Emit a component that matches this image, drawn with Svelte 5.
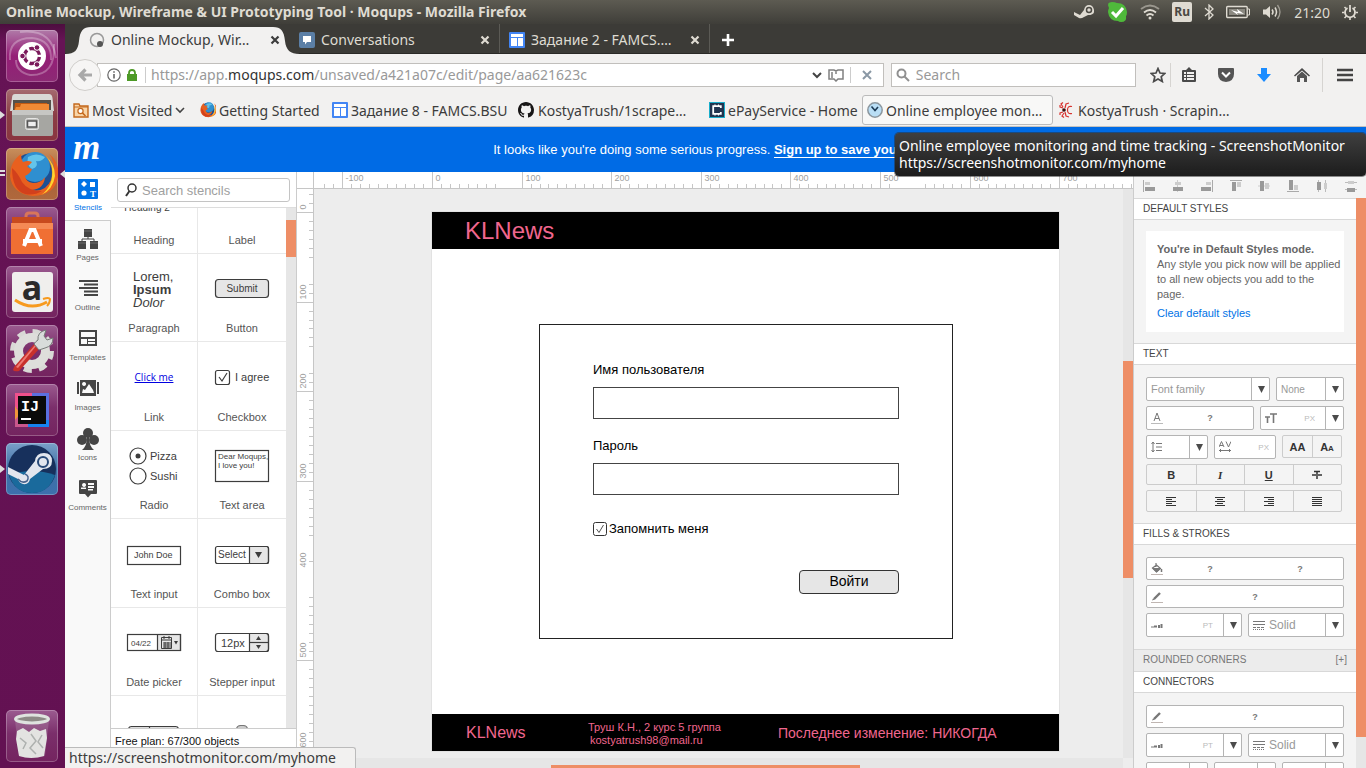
<script>
  const launcher = ['dash', 'files', 'firefox', 'software', 'amazon', 'settings', 'intellij', 'steam'];
  const running = { files: 'one', firefox: 'two', steam: 'one' };

  const tabs = [
    { icon: 'chat', title: 'Conversations' },
    { icon: 'site', title: 'Задание 2 - FAMCS.…' }
  ];

  const bookmarks = [
    { icon: 'folder', title: 'Most Visited', more: true },
    { icon: 'fox', title: 'Getting Started' },
    { icon: 'site', title: 'Задание 8 - FAMCS.BSU' },
    { icon: 'github', title: 'KostyaTrush/1scrape…', wide: true },
    { icon: 'epay', title: 'ePayService - Home' },
    { icon: 'clock', title: 'Online employee mon…', hover: true },
    { icon: 'spider', title: 'KostyaTrush · Scrapin…' }
  ];

  const sections = ['Stencils', 'Pages', 'Outline', 'Templates', 'Images', 'Icons', 'Comments'];

  const stencils = [
    'Heading', 'Label', 'Paragraph', 'Button', 'Link', 'Checkbox', 'Radio', 'Text area',
    'Text input', 'Combo box', 'Date picker', 'Stepper input'
  ];

  const aligners = ['Left', 'Center', 'Right', 'Top', 'Middle', 'Bottom', 'Spread', 'Stack'];

  const scale = 0.896;
  const range = (from, to) => Array.from({ length: (to - from) / 10 + 1 }, (_, i) => from + i * 10);
  const hSkip = [80, 90, 520, 530, 540];
  const vSkip = [60, 70, 160, 170, 370, 380, 400, 410, 420];
  const hTicks = range(-120, 780).filter((t) => !hSkip.includes(t));
  const vTicks = range(-20, 610).filter((t) => !vSkip.includes(t));
  const hx = (t) => Math.round(135 + t * scale) + 0.5;
  const vy = (t) => Math.round(23 + t * scale) + 0.5;

  let remember = $state(true);
</script>

{#snippet foxArt()}
  <circle cx="26" cy="25" r="20" fill="#1d4f93" />
  <circle cx="29" cy="19" r="15" fill="#2f8fd0" />
  <path d="M22 9q8-5 17 0q-3 5-9 4q3 6-4 8q-6-4-4-12z" fill="#63c4ea" />
  <path d="M5 20C7 13 11 9 15 6q0 5 2 8q5-2 9 0q-2 3-5 4q2 3 5 3q-2 5-7 7q1 6 8 7q8 0 12-6q-1 12-13 13q13 3 20-11q4-9 1-18q-1-4-4-7q11 8 9 23Q49 47 27 48Q6 46 4 28z" fill="#e8601f" />
  <path d="M40 8q9 8 9 20q-2 14-14 19q13-9 11-27q-1-6-6-12z" fill="#ffd42e" />
  <path d="M6 20q6 5 10 14q6 9 20 9q-8 5-17 3Q6 42 6 20z" fill="#d2401c" />
{/snippet}

{#snippet tile(name)}
  <svg viewBox="0 0 52 52" width="52" height="52" aria-hidden="true">
    {#if name === 'dash'}
      <g fill="none" stroke="#fff" stroke-opacity=".28" stroke-width="2">
        <path d="M4 30Q2 8 26 8Q46 10 45 30" /><path d="M48 14Q50 46 24 45Q10 42 10 30" /><path d="M14 2Q46-2 50 28" />
      </g>
      <circle cx="26" cy="26" r="14" fill="#fff" />
      <circle cx="26" cy="26" r="7.5" fill="none" stroke="#7b1a5c" stroke-width="3.4" stroke-dasharray="13.2 2.5" stroke-dashoffset="-1" />
      <g fill="#7b1a5c" stroke="#fff"><circle cx="16.5" cy="26" r="2.8" /><circle cx="31" cy="17.5" r="2.8" /><circle cx="31" cy="34.5" r="2.8" /></g>
    {:else if name === 'files'}
      <path d="M9 5h34q3 0 3.500 4L48 22H4L6 9q0-4 3-4z" fill="#d9d9d6" />
      <path d="M7 11h38v12H7z" fill="#55504a" />
      <path d="M9 14h32l2 9H8z" fill="#c25a12" /><path d="M15 15h28v8H8l2-5h4z" fill="#f08a35" />
      <path d="M6 21h41v24q0 2-2 2H8q-2 0-2-2z" fill="#a6a6a2" /><path d="M6 21h41v5H6z" fill="#c6c6c3" />
      <rect x="19.500" y="29.500" width="13" height="11" rx="2" fill="#b9b9b6" stroke="#e6e6e4" />
      <rect x="21.500" y="32" width="9" height="6" fill="#eee" stroke="#555" stroke-width="1.500" />
    {:else if name === 'firefox'}
      {@render foxArt()}
    {:else if name === 'software'}
      <path d="M20 18V9q0-3 3-3h6q3 0 3 3v9" fill="none" stroke="#d8765a" stroke-width="3" />
      <path d="M6 10h40v9H6z" fill="#c84a1e" /><path d="M5 16h42v31H5z" fill="#f06f33" /><path d="M5 16h42v6H5z" fill="#f58a55" />
      <path d="M18 39L24.500 23h4L35 39" fill="none" stroke="#fff" stroke-width="4" /><path d="M17 32h19v4H17z" fill="#fff" />
    {:else if name === 'amazon'}
      <rect x="6" y="6" width="41" height="40" rx="3" fill="#f0efed" />
      <text x="26" y="34" text-anchor="middle" font-family="Noto Sans, sans-serif" font-weight="700" font-size="34" fill="#2b2b2b">a</text>
      <path d="M9 34q16 11 32 2" fill="none" stroke="#f79a1e" stroke-width="3" /><path d="M37 33q6-2 7 0q0 4-3 7" fill="none" stroke="#f79a1e" stroke-width="2" />
    {:else if name === 'settings'}
      <circle cx="26" cy="26" r="19" fill="none" stroke="#d9d9d6" stroke-width="6" stroke-dasharray="7.920 7" />
      <circle cx="26" cy="26" r="13.500" fill="none" stroke="#dededb" stroke-width="9" />
      <path d="M8 42L28 19l5 5L13 46q-5 1-6-1z" fill="#c8302b" /><path d="M10 42L29 20l1 1L12 43z" fill="#ee7a72" />
      <path d="M28 19q2-3 4-4q-1-8 8-10l-2 6l3 4l6-2q0 8-8 10l-6 2z" fill="#d8dcda" stroke="#777b79" />
    {:else if name === 'intellij'}
      <path d="M9 9h17v17H9z" fill="#f0508c" /><path d="M26 9h17v34H26z" fill="#5b6fe0" /><path d="M9 24h18v19H9z" fill="#c9578c" /><path d="M22 36h21v7H22z" fill="#1683f0" /><path d="M9 22l5 8l-5 6z" fill="#f0963a" />
      <rect x="12" y="12" width="28" height="28" fill="#0a0a0a" />
      <text x="15" y="27" font-family="Liberation Mono, monospace" font-weight="700" font-size="15" fill="#fff">IJ</text><path d="M15 34h10v2H15z" fill="#fff" />
    {:else if name === 'steam'}
      <circle cx="26" cy="26" r="24" fill="#17305c" /><path d="M3 32q23-8 46 0q-6 18-23 18T3 32z" fill="#1a6a9c" />
      <path d="M2 24l16 8l11-14q1-8 9-8t8 8t-9 8L24 36q-1 6-7 5q-4-1-5-5L2 31z" fill="#e2e6ee" />
      <circle cx="37" cy="19" r="5" fill="none" stroke="#294a78" stroke-width="2" /><path d="M12 36q4 5 9 2q3-5-2-7" fill="none" stroke="#47648f" stroke-width="1.500" />
    {:else}
      <path d="M9 10h34l-4 36q-13 4-26 0z" fill="#dcdfe0" fill-opacity=".18" />
      <path d="M11 21l6-3l6 4l5-4l6 3l6-2l1 9l-3 18q-13 4-25 0l-3-17z" fill="#e3e3e1" />
      <path d="M14 28l6 5l-3 6M25 24l5 7l-6 7l6 6M36 25l-4 7l5 6" fill="none" stroke="#aeb1af" stroke-width="1.500" />
      <ellipse cx="26" cy="9" rx="16.500" ry="4" fill="#8d8a86" stroke="#dfe3df" stroke-width="3" />
    {/if}
  </svg>
{/snippet}

{#snippet favicon(name)}
  <svg viewBox="0 0 16 16" width="16" height="16" aria-hidden="true">
    {#if name === 'chat'}
      <rect width="16" height="16" rx="2" fill="#5b7fa6" /><path d="M4 4h8v6H8l-2 2.500V10H4z" fill="#fff" />
    {:else if name === 'site'}
      <rect width="16" height="16" rx="1" fill="#4285f4" /><path d="M2 2h12v3H2zM2 6h6v8H2zM9 6h5v8H9z" fill="#fff" />
    {:else if name === 'folder'}
      <path d="M1 15V2h5l1 2h8v11z" fill="#f9d5a8" stroke="#c4681c" stroke-width="1.400" /><path d="M1 5h14" stroke="#c4681c" />
      <circle cx="7.500" cy="9" r="2.600" fill="#fff" stroke="#c4681c" stroke-width="1.200" /><path d="M9.500 11l3 3" stroke="#c4681c" stroke-width="1.600" />
    {:else if name === 'fox'}
      <g transform="translate(-1 -1) scale(.34)">{@render foxArt()}</g>
    {:else if name === 'github'}
      <path fill="#181616" d="M8 0C3.580 0 0 3.580 0 8c0 3.540 2.290 6.530 5.470 7.590.4.070.55-.17.55-.38 0-.19-.01-.82-.01-1.490-2.010.37-2.530-.49-2.690-.94-.09-.23-.48-.94-.82-1.130-.28-.15-.68-.52-.01-.53.63-.01 1.080.58 1.230.82.72 1.210 1.870.87 2.330.66.070-.52.28-.87.51-1.070-1.780-.2-3.640-.89-3.640-3.950 0-.87.31-1.590.82-2.150-.08-.2-.36-1.020.08-2.120 0 0 .67-.21 2.200.82.64-.18 1.320-.27 2-.27s1.360.09 2 .27c1.530-1.040 2.200-.82 2.200-.82.44 1.100.16 1.920.08 2.120.51.56.82 1.270.82 2.150 0 3.070-1.870 3.750-3.650 3.950.29.25.54.73.54 1.480 0 1.070-.01 1.930-.01 2.200 0 .21.15.46.55.38A8.010 8.010 0 0 0 16 8c0-4.420-3.580-8-8-8z" />
    {:else if name === 'epay'}
      <rect x=".5" y=".5" width="15" height="15" fill="#22354f" stroke="#18aecb" /><path d="M11.800 6V4.200H4.200v7.600h7.600V10" fill="none" stroke="#fff" stroke-width="1.800" /><path d="M6 2.500v2M9.500 2.500v2M6 11.500v2M9.500 11.500v2" stroke="#fff" stroke-width="1.200" />
    {:else if name === 'clock'}
      <circle cx="8" cy="8" r="7.200" fill="#b9def5" stroke="#8b969e" stroke-width="1.500" /><path d="M4.500 4.500L8 8.500l3-3.500" fill="none" stroke="#1c3a55" stroke-width="1.600" />
    {:else if name === 'spider'}
      <g fill="none" stroke="#d8332f" stroke-width="1.200"><path d="M4 6L1 5V3M4 5L2 2l2-1.500M4 10l-3 1v2M5 11l-2 3l2 1.500M6 6l1-4l3-1M6 10l1 4l3 1M13 4.500q-4.500-1-4.500 3.500t4.500 3.500" /></g><circle cx="5" cy="8" r="1.800" fill="#3a0d0d" />
    {/if}
  </svg>
{/snippet}

{#snippet closeMark()}
  <svg viewBox="0 0 10 10" width="10" height="10" aria-hidden="true"><path d="M1.500 1.500l7 7M8.500 1.500l-7 7" stroke="currentColor" stroke-width="2.200" /></svg>
{/snippet}

{#snippet sectionIcon(name)}
  <svg viewBox="0 0 24 24" width="24" height="24" fill="#454545" aria-hidden="true">
    {#if name === 'Stencils'}
      <rect x="2" y="2" width="20" height="20" rx="1" fill="#0072e6" /><path d="M8 4l3 3l-3 3l-3-3z" fill="#fff" /><rect x="14" y="5" width="5" height="5" fill="#fff" /><circle cx="8" cy="16" r="2.600" fill="#fff" />
      <text x="17" y="20" text-anchor="middle" font-family="Liberation Serif, serif" font-weight="700" font-size="9" fill="#fff">T</text>
    {:else if name === 'Pages'}
      <path d="M8 2h8v8H8zM2 14h8v8H2zM14 14h8v8h-8z" /><path d="M12 10v2M6 14v-2h12v2" fill="none" stroke="#454545" />
      <path d="M8 4h8M2 16h8M14 16h8" stroke="#888" stroke-width=".6" />
    {:else if name === 'Outline'}
      <path d="M3 3h19v2H3zM8 6.500h14v2H8zM3 10h19v2H3zM8 13.500h14v2H8zM8 17h14v2H8z" />
    {:else if name === 'Templates'}
      <path fill-rule="evenodd" d="M3 3h18v16H3zM5 5v5h14V5zM5 12v5h6v-5zM12 12v2h7v-2zM12 15v2h7v-2z" />
    {:else if name === 'Images'}
      <path fill-rule="evenodd" d="M4 3h16v16H4zM6 16h12l-1-3l-4-6l-4 6l-2-1zM8 5a2 2 0 1 0 .1 0z" /><path d="M1 5h2v12H1zM21 5h2v12h-2z" />
    {:else if name === 'Icons'}
      <circle cx="12" cy="6" r="5" /><circle cx="6" cy="13" r="5" /><circle cx="18" cy="13" r="5" /><path d="M11 10h2q0 9 5 13H6q5-4 5-13z" />
    {:else}
      <path fill-rule="evenodd" d="M4 3h16q1 0 1 1v12q0 1-1 1h-5l-3 3.500L9 17H4q-1 0-1-1V4q0-1 1-1zM8 6a2 2 0 1 0 .1 0zM5 12h5v-1.500H5zM12 6v2h6V6zM12 9v2h6V9zM12 12v1.500h5V12z" />
    {/if}
  </svg>
{/snippet}

{#snippet preview(name)}
  <svg viewBox="0 0 88 68" width="88" height="68" fill="none" stroke="#3d3d3d" stroke-width="1.200" font-family="Liberation Sans, Arial, sans-serif" aria-hidden="true">
    {#if name === 'Heading'}
      <text class="ink" x="37" y="46" text-anchor="middle" font-size="10">Heading 2</text>
    {:else if name === 'Paragraph'}
      <g class="ink" font-size="13"><text x="23" y="28">Lorem,</text><text x="23" y="41" font-weight="700">Ipsum</text><text x="23" y="54" font-style="italic">Dolor</text></g>
    {:else if name === 'Button'}
      <rect x="17.500" y="26.500" width="53" height="18" rx="3" fill="#e6e6e6" /><text class="ink" x="44" y="39" text-anchor="middle" font-size="10">Submit</text>
    {:else if name === 'Link'}
      <text x="44" y="39" text-anchor="middle" font-family="Open Sans, sans-serif" font-size="10" fill="#0000e0" stroke="none" text-decoration="underline">Click me</text>
    {:else if name === 'Checkbox'}
      <rect x="17.500" y="28.500" width="14" height="14" rx="2" /><path d="M21 35l3 4l5-8" /><text class="ink" x="37" y="39" font-size="11">I agree</text>
    {:else if name === 'Radio'}
      <circle cx="28" cy="26" r="8" /><circle cx="28" cy="46" r="8" /><circle cx="28" cy="26" r="2.500" fill="#3d3d3d" stroke="none" />
      <g class="ink" font-size="11"><text x="40" y="30">Pizza</text><text x="40" y="50">Sushi</text></g>
    {:else if name === 'Text area'}
      <rect x="17.500" y="20.500" width="53" height="31" /><g class="ink" font-size="8"><text x="20" y="29">Dear Moqups,</text><text x="20" y="38">I love you!</text></g>
    {:else if name === 'Text input'}
      <rect x="17.500" y="27.500" width="53" height="18" /><text class="ink" x="24" y="39" font-size="9">John Doe</text>
    {:else if name === 'Combo box'}
      <path d="M51.500 27.500h17q2 0 2 2v13q0 2-2 2h-17z" fill="#e6e6e6" /><rect x="17.500" y="27.500" width="53" height="17" rx="2" /><path d="M57 33h7l-3.500 6z" fill="#3d3d3d" stroke="none" /><text class="ink" x="20" y="39" font-size="10">Select</text>
    {:else if name === 'Date picker'}
      <path d="M47.500 27.500h23v16h-23z" fill="#e6e6e6" /><rect x="17.500" y="27.500" width="53" height="16" /><text class="ink" x="21" y="39" font-size="8">04/22</text>
      <path d="M51.500 30.500h10v11h-10zM51 33h11M53 36h8M53 38h8M53 40h8M54 29v3M59 29v3M55 35v6M58 35v6" stroke-width="1" /><path d="M64 34h4l-2 3.500z" fill="#3d3d3d" stroke="none" />
    {:else if name === 'Stepper input'}
      <path d="M51.500 26.500h17q2 0 2 2v14q0 2-2 2h-17z" fill="#e6e6e6" /><rect x="17.500" y="26.500" width="53" height="18" rx="2.500" /><path d="M51.500 35.500h19" /><path d="M58 33h5l-2.500-4zM58 38h5l-2.500 4z" fill="#3d3d3d" stroke="none" /><text class="ink" x="23" y="40" font-size="11">12px</text>
    {:else if name === 'Segments'}
      <rect x="18.500" y="30.500" width="50" height="18" rx="3" fill="#ddd" /><path d="M39.500 30v18" />
    {:else if name === 'Slider'}
      <rect x="38.500" y="29.500" width="11" height="18" rx="4" fill="#ccc" stroke="#777" />
    {/if}
  </svg>
{/snippet}

{#snippet glyph(name)}
  <svg viewBox="0 0 12 12" width="12" height="12" fill="none" stroke="#777" aria-hidden="true">
    {#if name === 'fill'}
      <path d="M5 0v4M1.500 5l4-3l4 3.500l-4 3.500z" stroke-width="1.200" /><path d="M2 5.500h7.500L5.500 9z" fill="#777" /><path d="M10.500 6v3" stroke-width="1.500" /><path d="M0 11.500h12" stroke="#c0b6b2" />
    {:else if name === 'pen'}
      <path d="M3 8l6-6" stroke-width="2.400" /><path d="M1 9.500l3-1l-2-1z" fill="#777" stroke="none" /><path d="M0 11.500h12" stroke="#c0b6b2" />
    {:else if name === 'color'}
      <path d="M3 9l3-8l3 8M4 6.500h4" /><path d="M0 11.500h12" stroke="#bbb" />
    {:else if name === 'size'}
      <path d="M5 2h7M8.500 2v9M0 5h5M2.500 5v6" stroke-width="1.600" />
    {:else if name === 'line'}
      <path d="M2 1v10M.5 3L2 1l1.500 2M.5 9L2 11l1.500-2M5 2.500h6M5 6h6M5 9.500h6" />
    {:else if name === 'space'}
      <path d="M0 6l2.500-5.500L5 6M1 4.500h3M7 .5L9.500 6L12 .5M0 9.500h12M2 8l-1.500 1.500L2 11M10 8l1.500 1.500L10 11" />
    {:else if name === 'weight'}
      <path d="M0 8h3" /><path d="M3 7.500h3" stroke-width="2" /><path d="M7 7.500h2" stroke-width="3" /><path d="M9.500 7h2" stroke-width="4" />
    {:else if name === 'dash'}
      <path d="M0 2.500h12M0 5.500h12" /><path d="M0 8.500h12" stroke-dasharray="3 1" /><path d="M0 10.500h12" stroke-dasharray="1 1" />
    {/if}
  </svg>
{/snippet}

{#snippet arrow()}
  <svg class="arrow" viewBox="0 0 18 22" width="18" height="22" aria-hidden="true"><path d="M6 8h7l-3.500 7z" fill="#4b4b4b" /></svg>
{/snippet}

{#snippet strokeRow(id)}
  <div class="row half">
    <div class="box unit">
      {@render glyph('weight')}
      <input type="text" placeholder="PT" aria-label="Width" />
      <button type="button" class="drop" aria-label="Width presets">{@render arrow()}</button>
    </div>
    <div class="box pick">
      {@render glyph('dash')}
      <select {id} class="big" aria-label="Line style"><option>Solid</option></select>
      <span class="drop">{@render arrow()}</span>
    </div>
  </div>
{/snippet}

<div class="desktop">
  <header class="topbar">
    <h1>Online Mockup, Wireframe &amp; UI Prototyping Tool · Moqups - Mozilla Firefox</h1>
    <div class="tray">
      <svg viewBox="0 0 20 14" width="20" height="14" aria-hidden="true"><path d="M0 7l6 3l4-5q1-5 5-5t5 5t-6 5l-4 2q-3 2-5 1L0 10z" fill="#dfdbd2" /><circle cx="15" cy="5" r="2.500" fill="none" stroke="#4c4a44" stroke-width="1.500" /></svg>
      <svg viewBox="0 0 22 22" width="22" height="22" aria-hidden="true"><path d="M6 1q3 0 5 1q9 0 10 9q0 3-1 4q1 6-5 6q-2 0-3-1q-9 0-10-9q0-2 1-4q-3-6 3-6z" fill="#4fb93b" /><path d="M6 11l4 4l7-8" fill="none" stroke="#fff" stroke-width="3" /></svg>
      <svg viewBox="0 0 20 16" width="20" height="16" fill="none" stroke="#dfdbd2" stroke-width="1.800" aria-hidden="true"><path d="M1 5q9-7 18 0" opacity=".5" /><path d="M4 8.500q6-5 12 0M6.500 11.500q3.500-3 7 0" /><circle cx="10" cy="14" r="1.500" fill="#dfdbd2" stroke="none" /></svg>
      <span class="lang">Ru</span>
      <svg viewBox="0 0 10 16" width="10" height="16" fill="none" stroke="#dfdbd2" stroke-width="1.300" aria-hidden="true"><path d="M1 4l8 7l-4 4V1l4 4l-8 7" /></svg>
      <svg viewBox="0 0 24 14" width="24" height="14" fill="none" stroke="#dfdbd2" aria-hidden="true"><rect x=".7" y="1.500" width="20.500" height="11" rx="1" stroke-width="1.400" /><path d="M22 4h1.500v6H22" /><path d="M3 4h16v6H3z" fill="#8b8981" stroke="none" /><path d="M5 5l7 2l-1-3l7 5l-7-1l1 2z" fill="#fff" stroke="none" /></svg>
      <svg viewBox="0 0 20 16" width="20" height="16" aria-hidden="true"><path d="M1 5.500h3L8 2v12l-4-3.500H1z" fill="#dfdbd2" /><path d="M10 5.500q2 2.500 0 5M13 3.500q3 4.500 0 9" fill="none" stroke="#dfdbd2" stroke-width="1.500" /><path d="M15.500 1q5 7 0 14" fill="none" stroke="#a09d94" stroke-width="1.300" /></svg>
      <time>21:20</time>
      <svg viewBox="0 0 16 16" width="16" height="16" fill="none" stroke="#dfdbd2" aria-hidden="true"><path d="M5.500 4a5 5 0 1 0 5 0" stroke-width="1.800" /><path d="M8 1v7" stroke-width="1.800" /><path d="M2.500 8.500H0M16 8.500h-2.500M4.500 12l-2 2M11.500 12l2 2M8 14v2M4 4.500L2.500 3M12 4.500L13.500 3" stroke-width="1.600" /></svg>
    </div>
  </header>

  <nav class="launcher" aria-label="Launcher">
    {#each launcher as name}
      <div class="slot">
        {#if running[name]}<i class={running[name]}></i>{/if}
        <button type="button" class="tile {name}" aria-label={name}>{@render tile(name)}</button>
        {#if name === 'firefox'}<i class="focus"></i>{/if}
      </div>
    {/each}
    <div class="slot last"><button type="button" class="tile" aria-label="trash">{@render tile('trash')}</button></div>
  </nav>

  <div class="browser">
    <div class="tabs">
      <div class="tab active">
        <svg class="shape" viewBox="0 0 235 27" width="235" height="27" aria-hidden="true"><path d="M0 27C10 27 13 23 14 14C15 4 18 0 26 0H208C216 0 219 4 220 14C221 23 225 27 235 27z" fill="#f2f1f0" /></svg>
        <svg viewBox="0 0 16 16" width="16" height="16" aria-hidden="true"><circle cx="8" cy="8" r="6.500" fill="none" stroke="#999" stroke-width="1.500" /><circle cx="11" cy="12" r="3" fill="#555" /></svg>
        <span>Online Mockup, Wir…</span>
        <button type="button" aria-label="Close tab">{@render closeMark()}</button>
      </div>
      {#each tabs as tab}
        <div class="tab">
          {@render favicon(tab.icon)}
          <span>{tab.title}</span>
          <button type="button" aria-label="Close tab">{@render closeMark()}</button>
        </div>
      {/each}
      <button type="button" class="new" aria-label="New tab"><svg viewBox="0 0 14 14" width="14" height="14" aria-hidden="true"><path d="M7 1v12M1 7h12" stroke="#fff" stroke-width="2.600" /></svg></button>
    </div>

    <div class="navbar">
      <button type="button" class="back" aria-label="Back"><svg viewBox="0 0 16 16" width="16" height="16" aria-hidden="true"><path d="M15 8H4M8.500 2.500L3 8l5.500 5.500" fill="none" stroke="#a9a9a9" stroke-width="3.200" /></svg></button>
      <div class="url">
        <svg viewBox="0 0 14 14" width="14" height="14" fill="none" stroke="#666" aria-hidden="true"><circle cx="7" cy="7" r="6.200" stroke-width="1.200" /><path d="M7 6v4.500M7 3.200v1.500" stroke-width="1.600" /></svg>
        <svg viewBox="0 0 10 12" width="10" height="12" aria-hidden="true"><path d="M2 6V4q0-3 3-3t3 3v2" fill="none" stroke="#4d9a26" stroke-width="1.800" /><path d="M0 5h10v7H0z" fill="#4d9a26" /></svg>
        <span class="address">https://app.<b>moqups.com</b>/unsaved/a421a07c/edit/page/aa621623c</span>
        <svg viewBox="0 0 10 8" width="10" height="8" aria-hidden="true"><path d="M1 2l4 4l4-4" fill="none" stroke="#444" stroke-width="2" /></svg>
        <svg viewBox="0 0 16 14" width="16" height="14" fill="none" stroke="#808080" stroke-width="1.500" aria-hidden="true"><path d="M1 2h5l2 1l2-1h5v9h-5l-2 2l-2-2H1zM8 3v3M3 5h2M3 7h2M3 9h2" /></svg>
        <button type="button" class="stop" aria-label="Stop"><svg viewBox="0 0 10 10" width="10" height="10" aria-hidden="true"><path d="M1 1l8 8M9 1l-8 8" stroke="#8a98a5" stroke-width="2" /></svg></button>
      </div>
      <label class="find">
        <svg viewBox="0 0 14 14" width="14" height="14" fill="none" stroke="#909090" stroke-width="2" aria-hidden="true"><circle cx="5.500" cy="5.500" r="4" /><path d="M8.500 8.500L13 13" /></svg>
        <input type="search" placeholder="Search" aria-label="Search" />
      </label>
      <div class="tools">
        <button type="button" aria-label="Bookmark"><svg viewBox="0 0 16 16" width="16" height="16" aria-hidden="true"><path d="M8 1.500l2 4.500l4.800.5l-3.600 3.200l1.100 4.800L8 12l-4.300 2.500l1.100-4.800L1.200 6.500L6 6z" fill="none" stroke="#4a4a4a" stroke-width="1.700" /></svg></button>
        <button type="button" aria-label="Bookmarks list"><svg viewBox="0 0 16 16" width="16" height="16" aria-hidden="true"><path fill-rule="evenodd" d="M2 3h3l3-3l3 3h3q1 0 1 1v10q0 1-1 1H2q-1 0-1-1V4q0-1 1-1zM3 5v2h2V5zM6 5v2h7V5zM3 8v2h2V8zM6 8v2h7V8zM3 11v2h2v-2zM6 11v2h7v-2z" fill="#4a4a4a" /></svg></button>
        <button type="button" aria-label="Pocket"><svg viewBox="0 0 16 16" width="16" height="16" aria-hidden="true"><path d="M1 1h14q1 0 1 1v5q0 7-8 8Q0 14 0 7V2q0-1 1-1z" fill="#555" /><path d="M4 5.500l4 4l4-4" fill="none" stroke="#fff" stroke-width="2" /></svg></button>
        <button type="button" aria-label="Downloads"><svg viewBox="0 0 16 16" width="16" height="16" aria-hidden="true"><path d="M5 1h6v6h4l-7 8l-7-8h4z" fill="#1a8cff" /></svg></button>
        <button type="button" aria-label="Home"><svg viewBox="0 0 16 16" width="16" height="16" aria-hidden="true"><path d="M0 8.500L8 1l8 7.500l-1 1L8 3.500L1 9.500z" fill="#4a4a4a" /><path d="M3 9l5-4.500L13 9v6h-3v-4H6v4H3z" fill="#555" /></svg></button>
        <button type="button" class="menu" aria-label="Menu"><svg viewBox="0 0 16 14" width="16" height="14" aria-hidden="true"><path d="M0 2h16M0 7h16M0 12h16" stroke="#444" stroke-width="2.400" /></svg></button>
      </div>
    </div>

    <div class="bookmarks">
      {#each bookmarks as mark}
        <a href="#bookmark" class:hover={mark.hover} class:wide={mark.wide}>
          {@render favicon(mark.icon)}<span>{mark.title}</span>
          {#if mark.more}<svg viewBox="0 0 10 8" width="10" height="8" aria-hidden="true"><path d="M1 2l4 4l4-4" fill="none" stroke="#444" stroke-width="1.600" /></svg>{/if}
        </a>
      {/each}
    </div>

    <div class="banner">
      <span class="logo">m</span>
      <p>It looks like you're doing some serious progress. <a href="#signup">Sign up to save your</a></p>
    </div>

    <div class="app">
      <nav class="sections" aria-label="Panels">
        {#each sections as name, i}
          <button type="button" class:current={i === 0}>{@render sectionIcon(name)}<span>{name}</span></button>
        {/each}
      </nav>

      <aside class="stencils">
        <label class="lookup">
          <svg viewBox="0 0 14 14" width="14" height="14" fill="none" stroke="#333" stroke-width="1.500" aria-hidden="true"><circle cx="8" cy="5" r="4" /><path d="M5.500 8L2 13" stroke-width="2" /></svg>
          <input type="search" placeholder="Search stencils" aria-label="Search stencils" />
        </label>
        <div class="shelf">
          <div class="list">
            {#each stencils as name}
              <button type="button">{@render preview(name)}<span>{name}</span></button>
            {/each}
            <button type="button" class="cut" aria-label="Segments">{@render preview('Segments')}</button>
            <button type="button" class="cut" aria-label="Slider">{@render preview('Slider')}</button>
          </div>
          <div class="bar"><i class="short"></i></div>
        </div>
        <p>Free plan: 67/300 objects</p>
      </aside>

      <main class="canvas">
        <svg class="ruler top" width="100%" height="17" aria-hidden="true">
          <path d="M16.500 0v17" stroke="#c6c6c6" />
          {#each hTicks as t}
            <path d="M{hx(t)} {t % 100 ? 12 : 0}V17" stroke="#c6c6c6" />
            {#if t % 100 === 0}<text x={hx(t) + 3} y="9">{t}</text>{/if}
          {/each}
        </svg>
        <svg class="ruler side" width="17" height="100%" aria-hidden="true">
          {#each vTicks as t}
            <path d="M{t % 100 ? 12 : 0} {vy(t)}H17" stroke="#c6c6c6" />
          {/each}
          {#each [0, 100, 200, 300, 400, 500, 600] as t}
            <text transform="translate(9 {vy(t) - 3}) rotate(-90)">{t}</text>
          {/each}
        </svg>
        <div class="stage">
          <article class="sheet">
            <header>KLNews</header>
            <div class="middle">
              <form onsubmit={(e) => e.preventDefault()}>
                <label for="user">Имя пользователя</label>
                <input id="user" type="text" />
                <label for="pass">Пароль</label>
                <input id="pass" type="password" />
                <label class="check">
                  <input type="checkbox" bind:checked={remember} />
                  <svg viewBox="0 0 14 14" width="14" height="14" fill="none" aria-hidden="true"><rect x=".5" y=".5" width="13" height="13" rx="2" stroke="#333" />{#if remember}<path d="M3.500 7l2.500 3.500L10.500 3" stroke="#555" />{/if}</svg>
                  Запомнить меня
                </label>
                <button type="submit">Войти</button>
              </form>
            </div>
            <footer>
              <strong>KLNews</strong>
              <address>Труш К.Н., 2 курс 5 группа<br /><span>kostyatrush98@mail.ru</span></address>
              <em>Последнее изменение: НИКОГДА</em>
            </footer>
          </article>
        </div>
        <div class="bar vertical"><i></i></div>
        <div class="bar horizontal"><i></i></div>
      </main>

      <aside class="props">
        <div class="aligners">
          {#each aligners as name, i}
            <button type="button" aria-label={name}>
              <svg viewBox="0 0 12 12" width="12" height="12" aria-hidden="true">
                {#if i === 0}<path d="M.5 0v12" stroke="#aaa" /><path d="M2 2h5v3H2z" fill="#ccc" /><path d="M2 7h10v4H2z" fill="#999" />
                {:else if i === 1}<path d="M5.500 0v12" stroke="#ccc" /><path d="M3 2h6v3H3z" fill="#ccc" /><path d="M1 7h10v4H1z" fill="#999" />
                {:else if i === 2}<path d="M11.500 0v12" stroke="#aaa" /><path d="M5 2h5v3H5z" fill="#ccc" /><path d="M0 7h10v4H0z" fill="#999" />
                {:else if i === 3}<path d="M0 .5h12" stroke="#aaa" /><path d="M2 2h4v9H2z" fill="#999" /><path d="M7 2h4v5H7z" fill="#ccc" />
                {:else if i === 4}<path d="M0 6h12" stroke="#ccc" /><path d="M2 1h4v10H2z" fill="#999" /><path d="M7 3h4v6H7z" fill="#ccc" />
                {:else if i === 5}<path d="M0 11.500h12" stroke="#aaa" /><path d="M2 0h4v10H2z" fill="#999" /><path d="M7 5h4v5H7z" fill="#ccc" />
                {:else if i === 6}<path d="M2.500 0v12M9.500 0v12" stroke="#bbb" /><path d="M1 2h4v8H1z" fill="#999" /><path d="M8 3h3v6H8z" fill="#ccc" />
                {:else}<path d="M0 2.500h12M0 9.500h12" stroke="#bbb" /><path d="M3 1h6v3H3z" fill="#ccc" /><path d="M2 8h8v4H2z" fill="#999" />{/if}
              </svg>
            </button>
          {/each}
        </div>
        <div class="scroller">
          <div class="groups">
            <h2>DEFAULT STYLES</h2>
            <div class="group notes">
              <div class="card">
                <b>You're in Default Styles mode.</b>
                <p>Any style you pick now will be applied to all new objects you add to the page.</p>
                <a href="#clear">Clear default styles</a>
              </div>
            </div>
            <h2>TEXT</h2>
            <div class="group text">
              <div class="row font">
                <div class="box pick"><select aria-label="Font family"><option>Font family</option></select><span class="drop">{@render arrow()}</span></div>
                <div class="box pick"><select class="small" aria-label="Font style"><option>None</option></select><span class="drop">{@render arrow()}</span></div>
              </div>
              <div class="row color">
                <button type="button" class="box swatch">{@render glyph('color')}<b>?</b></button>
                <div class="box unit">{@render glyph('size')}<input type="text" placeholder="PX" aria-label="Text size" /><button type="button" class="drop" aria-label="Sizes">{@render arrow()}</button></div>
              </div>
              <div class="row metrics">
                <div class="box unit">{@render glyph('line')}<input type="text" aria-label="Line height" /><button type="button" class="drop" aria-label="Line heights">{@render arrow()}</button></div>
                <div class="box unit">{@render glyph('space')}<input type="text" placeholder="PX" aria-label="Letter spacing" /></div>
                <div class="set two"><button type="button">AA</button><button type="button">A<small>A</small></button></div>
              </div>
              <div class="set four">
                <button type="button">B</button><button type="button" class="slant">I</button><button type="button" class="under">U</button><button type="button" aria-label="Strikethrough"><svg viewBox="0 0 10 10" width="10" height="10" aria-hidden="true"><path d="M2 1.500h6M5 1v3M5 6v3M0 5h10" stroke="#333" stroke-width="1.500" /></svg></button>
              </div>
              <div class="set four tall">
                {#each ['M0 1.500h10M0 3.500h6M0 5.500h10M0 7.500h6M0 9.500h10', 'M0 1.500h10M2 3.500h6M0 5.500h10M2 7.500h6M0 9.500h10', 'M0 1.500h10M4 3.500h6M0 5.500h10M4 7.500h6M0 9.500h10', 'M0 1.500h10M0 3.500h10M0 5.500h10M0 7.500h10M0 9.500h10'] as d, i}
                  <button type="button" aria-label={['Left', 'Center', 'Right', 'Justify'][i]}><svg viewBox="0 0 10 11" width="10" height="11" aria-hidden="true"><path {d} stroke="#333" stroke-width="1.200" /></svg></button>
                {/each}
              </div>
            </div>
            <h2>FILLS &amp; STROKES</h2>
            <div class="group fills">
              <button type="button" class="box swatch double">{@render glyph('fill')}<b>?</b><b>?</b></button>
              <button type="button" class="box swatch">{@render glyph('pen')}<b>?</b></button>
              {@render strokeRow('stroke-style')}
            </div>
            <h2 class="closed">ROUNDED CORNERS <span>[+]</span></h2>
            <h2>CONNECTORS</h2>
            <div class="group connectors">
              <button type="button" class="box swatch">{@render glyph('pen')}<b>?</b></button>
              {@render strokeRow('connector-style')}
              <div class="row metrics ends">
                {#each ['Start', 'Middle', 'End'] as end}
                  <div class="box pick"><select aria-label={end}></select><span class="drop">{@render arrow()}</span></div>
                {/each}
              </div>
            </div>
          </div>
          <div class="bar"><i class="long"></i></div>
        </div>
      </aside>
    </div>
    <div class="status">https://screenshotmonitor.com/myhome</div>
    <div class="tooltip" role="tooltip">Online employee monitoring and time tracking - ScreenshotMonitor<br />https://screenshotmonitor.com/myhome</div>
  </div>
</div>

<style>
  :global(body) { margin: 0; overflow: hidden; }
  .desktop, .desktop * { box-sizing: border-box; }
  .desktop {
    display: grid;
    grid-template: 24px minmax(0, 1fr) / 65px minmax(0, 1fr);
    height: 100vh;
    font-family: 'Noto Sans', 'Open Sans', sans-serif;
    font-size: 14px;
    color: #3c3c3c;
  }
  button, input, select { font: inherit; color: inherit; margin: 0; padding: 0; border: 0; background: none; border-radius: 0; outline: 0; }
  select, input { appearance: none; min-width: 0; }
  svg { display: block; flex: none; }
  h1, h2, p { margin: 0; }
  a { color: inherit; text-decoration: none; }

  .topbar {
    grid-column: 1 / -1;
    display: flex;
    align-items: center;
    justify-content: space-between;
    padding: 0 8px 0 6px;
    background: linear-gradient(#5d5b52, #3f3e39);
    color: #dfdbd2;
  }
  h1 { font-size: 14px; font-weight: 700; line-height: 24px; white-space: nowrap; }
  .tray { display: flex; align-items: center; gap: 12px; }
  .lang { width: 20px; height: 20px; border-radius: 2px; background: #dfdbd2; color: #4a4842; font-size: 12px; font-weight: 700; line-height: 20px; text-align: center; }

  .launcher { display: flex; flex-direction: column; gap: 7px; padding: 6px 0; background: linear-gradient(#4d0d3f, #661355 16px, #631152); }
  .slot { position: relative; padding-left: 6px; height: 52px; }
  .slot.last { margin-top: auto; }
  .tile { display: block; width: 52px; height: 52px; border-radius: 5px; overflow: hidden; background: linear-gradient(#9b5b90, #7b2f6b 45%, #74245f); box-shadow: inset 0 0 0 1px #ffffff40; }
  .tile.dash { background: linear-gradient(#b07aa8, #951e77 50%, #8c2a74); }
  .tile.files { background: linear-gradient(#a56b70, #8b3d46 50%, #8a3540); }
  .tile.firefox { background: linear-gradient(#c98f5c, #a86239 50%, #b0683c); }
  .tile.steam { background: linear-gradient(#7aa0c8, #3e6fa6 50%, #3d70ad); }
  .slot i { position: absolute; left: 0; top: 22px; border: 4px solid transparent; border-left: 5px solid #ddd; border-right: 0; }
  .slot i.two { width: 5px; height: 6px; border: 2px solid #ddd; border-width: 2px 0; }
  .slot i.focus { left: auto; right: 0; top: 22px; border-left: 0; border-right: 5px solid #ddd; }

  .browser { position: relative; display: flex; flex-direction: column; min-height: 0; background: #f2f1f0; }

  .tabs { display: flex; height: 30px; background: #3c3b37; border-bottom: 1px solid #2a2926; color: #dfdbd2; }
  .tab { position: relative; display: flex; align-items: center; gap: 6px; width: 210px; padding: 2px 9px 0; border-right: 1px solid #5b5a55; }
  .tab.active { width: 225px; padding: 2px 10px 0 24px; border: 0; color: #3c3c3c; z-index: 1; }
  .tab > * { position: relative; }
  .tab .shape { position: absolute; left: 0; top: 3px; }
  .tab span { flex: 1; white-space: nowrap; overflow: hidden; }
  .new { width: 36px; display: grid; place-items: center; padding-top: 3px; }

  .navbar { display: flex; align-items: center; height: 41px; padding-left: 4px; }
  .back { z-index: 1; display: grid; place-items: center; width: 32px; height: 32px; margin-right: -4px; border: 1px solid #d0cecb; border-radius: 50%; background: #f6f5f4; }
  .url { flex: 788; display: flex; align-items: center; gap: 6px; height: 24px; padding-left: 9px; border: 1px solid #c1bfbc; background: #fff; }
  .address { flex: 1; height: 16px; line-height: 16px; margin-left: 2px; padding-left: 5px; border-left: 1px solid #ccc; color: #999; white-space: nowrap; }
  .address b { font-weight: 400; color: #333; }
  .stop { display: grid; place-items: center; width: 33px; height: 16px; border-left: 1px solid #ccc; }
  .find { flex: 243; display: flex; align-items: center; gap: 6px; height: 24px; margin-left: 7px; padding-left: 4px; border: 1px solid #c1bfbc; background: #fff; }
  .find input { flex: 1; height: 20px; }
  .find input::placeholder { color: #999; opacity: 1; }
  .tools { display: flex; padding-left: 10px; }
  .tools button { display: grid; place-items: center; width: 38px; height: 24px; }
  .tools button:first-child { width: 24px; }
  .tools .menu { width: 44px; height: 34px; margin: -5px 0 -5px 1px; border-left: 1px solid #d6d4d1; }
  .tools button:nth-child(2) { width: 37px; border-left: 1px solid #d6d4d1; }

  .bookmarks { display: grid; grid-template-columns: 127px 132px 186px 191px 154px 190px 1fr; height: 32px; padding-left: 8px; padding-bottom: 1px; border-bottom: 1px solid #c4c2bf; }
  .bookmarks a { display: flex; align-items: center; gap: 3px; white-space: nowrap; }
  .bookmarks a.wide { gap: 4px; }
  .bookmarks a.hover { margin-left: -1px; padding-left: 4px; border: 1px solid #bbb; border-radius: 3px; background: #f8f8f7; }
  .bookmarks a:last-child { padding-left: 6px; }

  .banner { display: flex; align-items: center; height: 45px; padding: 0 8px; background: #006be5; color: #fff; font: 13px/16px 'Liberation Sans', Arial, sans-serif; }
  .banner .logo { width: 28px; padding-bottom: 4px; font: italic 700 35px/30px 'Liberation Serif', serif; }
  .banner p { flex: 1; padding-right: 64px; text-align: center; white-space: nowrap; }
  .banner a { font-weight: 700; border-bottom: 1px solid #fff; }

  .app { flex: 1; min-height: 0; display: grid; grid-template: minmax(0, 1fr) / 46px 186px minmax(0, 1fr) 233px; background: #fff; font-family: 'Liberation Sans', Arial, sans-serif; font-size: 11px; }

  .sections { display: flex; flex-direction: column; background: #f9f9f9; border-right: 1px solid #ccc; }
  .sections button { display: flex; flex-direction: column; align-items: center; gap: 2px; width: 45px; height: 50px; padding-top: 6px; color: #666; font-size: 8px; line-height: 10px; }
  .sections .current { width: 46px; height: 49px; padding-top: 5px; background: #fff; border-bottom: 1px solid #ccc; color: #0072e6; }

  .stencils { display: flex; flex-direction: column; min-height: 0; border-right: 1px solid #ccc; }
  .lookup { display: flex; align-items: center; gap: 4px; height: 24px; margin: 6px 6px 5px; padding-left: 6px; border: 1px solid #c4c4c4; border-radius: 3px; font-size: 13px; }
  .lookup input { flex: 1; }
  .lookup input::placeholder { color: #a0a0a0; opacity: 1; }
  .shelf { flex: 1; min-height: 0; display: flex; border-top: 1px solid #ddd; overflow: hidden; }
  .list { flex: 1; display: grid; grid-template-columns: 87px minmax(0, 1fr); grid-template-rows: 46px repeat(5, minmax(0, 1fr)) 32px; overflow: hidden; }
  .list button { display: flex; flex-direction: column; align-items: center; justify-content: flex-end; min-width: 0; min-height: 0; padding-bottom: 6px; border-bottom: 1px solid #e8e8e8; color: #555; line-height: 14px; }
  .list button:nth-child(odd) { border-right: 1px solid #e8e8e8; }
  .list .cut { justify-content: flex-start; border-bottom: 0; }
  .ink { fill: #3d3d3d; stroke: none; }
  .bar { width: 10px; background: #e6e6e6; }
  .bar i { display: block; background: #ee8e66; }
  .bar .short { height: 37px; margin-top: 12px; }
  .bar .long { height: 539px; }
  .stencils p { height: 40px; padding: 5px 4px; border-top: 1px solid #ccc; color: #111; line-height: 14px; }

  .canvas { display: grid; grid-template: 17px minmax(0, 1fr) 10px / 17px minmax(0, 1fr) 10px; background: #ededed; }
  .ruler { background: #fff; font-size: 9px; }
  .ruler text { fill: #a0a0a0; }
  .ruler.top { grid-column: 1 / -1; border-bottom: 1px solid #c6c6c6; }
  .ruler.side { grid-row: 2 / 4; border-right: 1px solid #c6c6c6; }
  .stage { display: flex; padding: 23px 64px 7px 118px; }
  .bar.vertical { display: flex; flex-direction: column; justify-content: center; padding-bottom: 8px; }
  .bar.vertical i { height: 217px; }
  .bar.horizontal { grid-column: 2; width: auto; padding-left: 237px; }
  .bar.horizontal i { width: 309px; height: 10px; margin-top: 7px; }
  .bar.horizontal { overflow: hidden; }

  .sheet { flex: 1; display: flex; flex-direction: column; background: #fff; box-shadow: 0 0 0 1px #e2e2e2; color: #000; }
  .sheet header { height: 37px; padding-left: 33px; background: #000; color: #f0668e; font-size: 24px; line-height: 38px; }
  .middle { flex: 1; display: flex; padding: 75px 106px 75px 107px; }
  form { flex: 1; display: flex; flex-direction: column; padding: 37px 53px 0; border: 1px solid #222; font-size: 13px; line-height: 16px; }
  form > input { height: 32px; margin: 9px 0 19px; padding: 0 8px; border: 1px solid #444; }
  .check { position: relative; display: flex; align-items: center; gap: 2px; margin-top: 7px; align-self: flex-start; }
  .check input { position: absolute; width: 14px; height: 14px; opacity: 0; }
  form button { align-self: flex-end; width: 100px; height: 24px; margin-top: 33px; padding-bottom: 3px; border: 1px solid #333; border-radius: 4px; background: #e6e6e6; font-size: 14px; }
  .sheet footer { display: flex; align-items: center; height: 37px; background: #000; color: #f0668e; white-space: nowrap; }
  .sheet strong { width: 156px; padding-left: 34px; font-size: 16px; font-weight: 400; }
  address { width: 190px; font-size: 11px; font-style: normal; line-height: 13px; padding-top: 2px; }
  address span { padding-left: 2px; }
  em { font-size: 14px; font-style: normal; }

  .props { display: flex; flex-direction: column; min-height: 0; border-left: 1px solid #ccc; background: #f4f4f4; }
  .aligners { display: flex; justify-content: space-between; align-items: center; height: 26px; padding: 2px 9px 0; }
  .scroller { flex: 1; display: flex; min-height: 0; overflow: hidden; }
  .groups { flex: 1; min-width: 0; }
  h2 { display: flex; justify-content: space-between; height: 22px; padding: 0 9px; border: 1px solid #d8d8d8; border-width: 1px 0; background: #fff; color: #444; font-size: 10px; font-weight: 400; line-height: 20px; }
  h2.closed { background: #ececec; color: #777; border-bottom: 0; height: 22px; }
  .group { display: flex; flex-direction: column; gap: 5px; padding: 12px; }
  .notes { padding: 11px 12px; }
  .card { padding: 11px 0 11px 11px; background: #fff; color: #666; line-height: 15px; }
  .card b { display: block; }
  .card p { margin-bottom: 4px; }
  .card a { color: #0072e6; }
  .group.text { padding-bottom: 11px; }
  .row { display: grid; gap: 6px; }
  .row.font { grid-template-columns: 124fr 68fr; }
  .row.color { grid-template-columns: 108fr 84fr; }
  .row.metrics { grid-template-columns: 62fr 62fr 62fr; }
  .row.half { grid-template-columns: 96fr 96fr; }
  .box { display: flex; align-items: center; gap: 4px; min-width: 0; height: 24px; padding-left: 4px; border: 1px solid #b4b4b4; border-radius: 2px; background: #fff; color: #999; }
  .box select { flex: 1; }
  .box .small { font-size: 10px; }
  .box .big { font-size: 12px; }
  .box input { flex: 1; width: 0; text-align: right; padding-right: 6px; font-size: 8px; }
  .box input::placeholder { color: #bbb; opacity: 1; }
  .drop { width: 18px; height: 22px; border-left: 1px solid #b4b4b4; pointer-events: none; }
  .swatch { width: 100%; height: 23px; }
  .row .swatch { height: 24px; }
  .swatch b { flex: 1; text-align: center; color: #777; font-size: 9px; }
  .set { display: grid; height: 21px; margin-right: 2px; border: 1px solid #ccc; border-radius: 2px; color: #333; font-weight: 700; }
  .set button { display: grid; place-items: center; }
  .set button + button { border-left: 1px solid #ccc; }
  .set.two { grid-template-columns: 1fr 1fr; height: 23px; }
  .set.two button { display: block; }
  .set small { font-size: 8px; }
  .set.four { grid-template-columns: repeat(4, 1fr); }
  .set.tall { height: 22px; }
  .slant { font-family: 'Liberation Serif', serif; font-style: italic; }
  .under { text-decoration: underline; }

  .status { position: absolute; left: 0; bottom: 0; height: 21px; min-width: 291px; padding: 0 4px; border: 1px solid #bbb; border-width: 1px 1px 0 0; border-radius: 0 3px 0 0; background: #f2f1f0; line-height: 20px; }
  .tooltip { position: absolute; right: 0; top: 109px; min-width: 471px; padding: 4px 4px 5px; border-radius: 4px; background: linear-gradient(#3f3f3f, #1c1c1c); box-shadow: 0 0 0 1px #2d2d2d88; color: #fff; line-height: 17px; white-space: nowrap; }
</style>
